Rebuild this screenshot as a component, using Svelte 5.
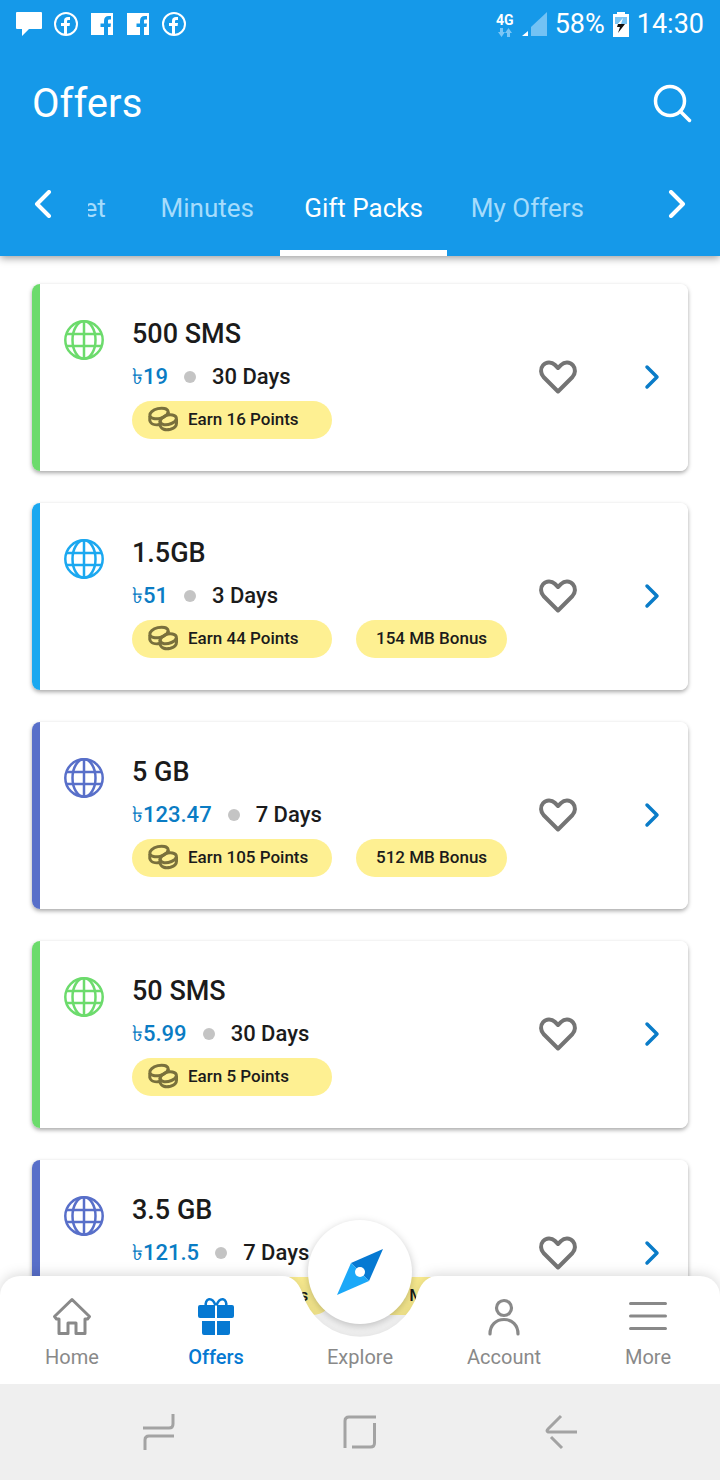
<script lang="ts">
    type Offer = {
        title: string;
        price: string;
        days: string;
        points: number;
        bonus?: string;
        color: 'green' | 'sky' | 'indigo';
    };

    const tabs = ['Internet', 'Minutes', 'Gift Packs', 'My Offers'];

    const offers: Offer[] = [
        { title: '500 SMS', price: '19', days: '30 Days', points: 16, color: 'green' },
        { title: '1.5GB', price: '51', days: '3 Days', points: 44, bonus: '154 MB Bonus', color: 'sky' },
        { title: '5 GB', price: '123.47', days: '7 Days', points: 105, bonus: '512 MB Bonus', color: 'indigo' },
        { title: '50 SMS', price: '5.99', days: '30 Days', points: 5, color: 'green' },
        { title: '3.5 GB', price: '121.5', days: '7 Days', points: 103, bonus: '358 MB Bonus', color: 'indigo' },
    ];

    let activeTab = $state('Gift Packs');
    let liked: Record<string, boolean> = $state({});
</script>

{#snippet facebookRound()}
    <svg width="24" height="24" viewBox="0 0 24 24" aria-hidden="true">
        <circle cx="12" cy="12" r="11" fill="none" stroke="#fff" stroke-width="2" />
        <path
            d="M10 22v-8H7v-3h3V9c0-3 1.600-4 4-4h2v3h-1.500c-1 0-1.500.4-1.500 1.400V11h3l-.4 3H13v8z"
            fill="#fff"
        />
    </svg>
{/snippet}

{#snippet facebookSquare()}
    <svg width="24" height="24" viewBox="0 0 24 24" aria-hidden="true">
        <path d="M1 1h22v22H1z" fill="#fff" />
        <path
            d="M14 23v-8h-3.500v-3.500H14V9c0-3.300 1.800-5 4.700-5H21v3.500h-1.500c-1.300 0-1.500.5-1.500 1.500v2.500h3l-.5 3.500H18v8z"
            fill="#1599e9"
        />
    </svg>
{/snippet}

<div class="screen">
    <header class="header">
        <div class="status-bar">
            <div class="status-group">
                <svg width="26" height="26" viewBox="1 0 26 26" aria-hidden="true">
                    <path d="M2 1h24q1 0 1 1v15q0 1-1 1H14l-7 7v-7H2q-1 0-1-1V2q0-1 1-1z" fill="#fff" />
                </svg>
                {@render facebookRound()}
                {@render facebookSquare()}
                {@render facebookSquare()}
                {@render facebookRound()}
            </div>
            <div class="status-group right">
                <div class="network">
                    <span>4G</span>
                    <svg width="14" height="9" viewBox="0 0 14 9" fill="#7cc6f5" aria-hidden="true">
                        <path d="M2 0h3v4h2L3.500 9 0 4h2z" />
                        <path d="M9 9h3V5h2l-3.500-5L7 5h2z" />
                    </svg>
                </div>
                <svg width="25" height="24" viewBox="0 0 25 24" aria-hidden="true">
                    <path d="M0 24h6v-5z" fill="#fff" />
                    <path d="M9 24V15L25 0v24z" fill="#73c2f4" />
                </svg>
                <span class="status-text">58%</span>
                <svg width="16" height="25" viewBox="0 0 16 25" aria-hidden="true">
                    <path d="M4 0h8v2h4v23H0V2h4z" fill="#fff" />
                    <path d="M2 5h12v7H2z" fill="#7cc6f5" />
                    <path d="M10 6 3 14h4l-3 7 8-9H8z" fill="#fff" />
                    <path d="M5 12h7l-7 9 2-6H4z" fill="#111" />
                </svg>
                <span class="status-text">14:30</span>
            </div>
        </div>

        <div class="title-bar">
            <h1>Offers</h1>
            <button class="icon-button" aria-label="Search">
                <svg width="40" height="40" viewBox="0 0 40 40" fill="none" stroke="#fff" stroke-width="3.500" stroke-linecap="round">
                    <circle cx="18" cy="17" r="14.500" />
                    <path d="m28.500 27.500 9 9" />
                </svg>
            </button>
        </div>

        <nav class="tab-bar" aria-label="Offer types">
            <button class="icon-button arrow" aria-label="Previous">
                <svg width="18" height="28" viewBox="0 0 18 28" fill="none" stroke="#fff" stroke-width="4" stroke-linecap="round" stroke-linejoin="round">
                    <path d="M15 2 3 14l12 12" />
                </svg>
            </button>
            <div class="tabs">
                {#each tabs as tab}
                    <button class="tab" class:active={activeTab === tab} onclick={() => (activeTab = tab)}>{tab}</button>
                {/each}
            </div>
            <button class="icon-button arrow" aria-label="Next">
                <svg width="18" height="28" viewBox="0 0 18 28" fill="none" stroke="#fff" stroke-width="4" stroke-linecap="round" stroke-linejoin="round">
                    <path d="m3 2 12 12L3 26" />
                </svg>
            </button>
        </nav>
    </header>

    <main class="list">
        {#each offers as offer}
            <article class="card {offer.color}">
                <svg class="globe" width="40" height="40" viewBox="0 0 40 40" fill="none" stroke="currentColor" stroke-width="2.500" aria-hidden="true">
                    <circle cx="20" cy="20" r="18.700" />
                    <ellipse cx="20" cy="20" rx="11.500" ry="18.700" />
                    <path d="M20 1v38M3 14h34M3 26h34" />
                </svg>
                <div class="details">
                    <h2>{offer.title}</h2>
                    <div class="terms">
                        <span class="price">৳{offer.price}</span>
                        <span class="dot"></span>
                        <span>{offer.days}</span>
                    </div>
                    <div class="badges">
                        <span class="badge points">
                            <svg width="30" height="26" viewBox="0 0 30 26" fill="none" stroke="#79703c" stroke-width="3" aria-hidden="true">
                                <ellipse cx="11" cy="7.500" rx="9.300" ry="5" transform="rotate(-14 11 7.500)" />
                                <path d="M1.800 10v4.500c.8 3.500 5 5 10 4M20.200 6v3" />
                                <path d="M12 15c2-4.500 7.500-7 12.500-6 6 1.500 4.500 6.500-1 8.500-5.500 2.300-10.500 1.800-11.500-2.500z" />
                                <path d="M12 15v4c1 4.500 5.500 5.500 10.500 4.300 4-1.200 6-3 6-6V13" />
                            </svg>
                            Earn {offer.points} Points
                        </span>
                        {#if offer.bonus}
                            <span class="badge">{offer.bonus}</span>
                        {/if}
                    </div>
                </div>
                <div class="actions">
                    <button
                        class="icon-button"
                        aria-label="Add {offer.title} to favourites"
                        aria-pressed={!!liked[offer.title]}
                        onclick={() => (liked[offer.title] = !liked[offer.title])}
                    >
                        <svg width="40" height="36" viewBox="0 0 40 36" fill={liked[offer.title] ? '#747474' : 'none'} stroke="#747474" stroke-width="4" stroke-linejoin="round">
                            <path d="M20 32.500 5.500 18C2.500 14.800 2.200 9.500 5 6.300c3.200-3.600 8.500-3.700 11.800-.5L20 9l3.200-3.200c3.300-3.200 8.600-3.100 11.800.5 2.800 3.200 2.500 8.500-.5 11.700z" />
                        </svg>
                    </button>
                    <button class="icon-button" aria-label="Open {offer.title}">
                        <svg width="16" height="26" viewBox="0 0 16 26" fill="none" stroke="#0a7cc8" stroke-width="3.500" stroke-linecap="round" stroke-linejoin="round">
                            <path d="m3 3 10 10L3 23" />
                        </svg>
                    </button>
                </div>
            </article>
        {/each}
    </main>

    <footer class="footer">
        <nav class="bottom-nav" aria-label="Main">
            <div class="nav-shape">
                <div class="side left"></div>
                <svg width="160" height="108" viewBox="0 0 160 108" aria-hidden="true">
                    <path d="M0 0h2c10 0 16 6 20 16A60 60 0 0 0 138 16c4-10 10-16 20-16h2v108H0z" fill="#fff" />
                </svg>
                <div class="side right"></div>
            </div>
            <a class="nav-item" href="#home">
                <svg width="40" height="40" viewBox="0 0 40 40" fill="none" stroke="#898989" stroke-width="3" stroke-linejoin="round" aria-hidden="true">
                    <path d="M20 2.500 2.500 19.500l2 2.500H7v14.500h9V26h8v10.500h9V22h2.500l2-2.500z" />
                </svg>
                Home
            </a>
            <a class="nav-item active" href="#offers" aria-current="page">
                <svg width="40" height="40" viewBox="0 0 40 40" fill="#0679d2" aria-hidden="true">
                    <path d="M4 8h15v13H4q-2 0-2-2v-9q0-2 2-2zM21 8h15q2 0 2 2v9q0 2-2 2H21zM6 24h13v14H8q-2 0-2-2zM21 24h13v12q0 2-2 2H21z" />
                    <path d="M19.500 8.500C18 4 15.500 2 13 2.300S9 6 10 9M20.500 8.500C22 4 24.500 2 27 2.300S31 6 30 9" fill="none" stroke="#0679d2" stroke-width="2.500" />
                </svg>
                Offers
            </a>
            <a class="nav-item" href="#explore">
                <span class="compass">
                    <svg width="48" height="48" viewBox="0 0 48 48" aria-hidden="true">
                        <path d="M47 1 15 15l18 18z" fill="#0679d2" />
                        <path d="M1 47 15 15l18 18z" fill="#1ba8f8" />
                        <circle cx="24" cy="24" r="5" fill="#fff" />
                    </svg>
                </span>
                Explore
            </a>
            <a class="nav-item" href="#account">
                <svg width="40" height="40" viewBox="0 0 40 40" fill="none" stroke="#898989" stroke-width="3.200" stroke-linecap="round" aria-hidden="true">
                    <circle cx="20" cy="11" r="7.500" />
                    <path d="M6 37c0-9 6-14.500 14-14.500S34 28 34 37" />
                </svg>
                Account
            </a>
            <a class="nav-item" href="#more">
                <svg width="40" height="40" viewBox="0 0 40 40" stroke="#898989" stroke-width="3" stroke-linecap="round" aria-hidden="true">
                    <path d="M2.500 6.500h35M2.500 19h35M2.500 31.500h35" />
                </svg>
                More
            </a>
        </nav>

        <div class="system-bar">
            <button class="icon-button" aria-label="Recent apps">
                <svg width="36" height="36" viewBox="0 0 36 36" fill="none" stroke="#a3a3a3" stroke-width="3">
                    <path d="M2 14h26q4 0 4-4V0M33 22H8q-4 0-4 4v10" />
                </svg>
            </button>
            <button class="icon-button" aria-label="Home screen">
                <svg width="36" height="36" viewBox="0 0 36 36" fill="none" stroke="#a3a3a3" stroke-width="3">
                    <path d="M34 3H7q-4 0-4 4v27M32.500 9v20q0 4-4 4H10" />
                </svg>
            </button>
            <button class="icon-button" aria-label="Back">
                <svg width="36" height="36" viewBox="0 0 36 36" fill="none" stroke="#a3a3a3" stroke-width="3">
                    <path d="M34 18H5q-2-1 0-3L18 2M8 23l11 11" />
                </svg>
            </button>
        </div>
    </footer>
</div>

<style>
    :global(body) {
        margin: 0;
        background-color: #fff;
    }

    .screen {
        position: relative;
        display: flex;
        flex-direction: column;
        height: 100vh;
        overflow: hidden;
        font-family: Roboto, 'Noto Sans', sans-serif;
        color: #1b1b1b;
    }

    .icon-button {
        display: flex;
        padding: 0;
        border: none;
        background: none;
        cursor: pointer;
    }

    .header {
        z-index: 1;
        background-color: #1599e9;
        color: #fff;
        box-shadow: 0 2px 8px rgba(0, 0, 0, 0.4);
    }

    .status-bar {
        display: flex;
        align-items: center;
        justify-content: space-between;
        height: 48px;
        padding: 0 16px;
    }

    .status-group {
        display: flex;
        align-items: center;
        gap: 12px;
    }

    .status-group.right {
        gap: 8px;
    }

    .status-text {
        font-size: 27px;
        line-height: 32px;
    }

    .network {
        display: flex;
        flex-direction: column;
        align-items: center;
        font-size: 14px;
        font-weight: 700;
        line-height: 16px;
    }

    .title-bar {
        display: flex;
        align-items: center;
        justify-content: space-between;
        height: 112px;
        padding: 0 28px 0 32px;
    }

    h1 {
        margin: 0;
        font-size: 40px;
        font-weight: 400;
        line-height: 52px;
    }

    .tab-bar {
        display: flex;
        align-items: center;
        height: 96px;
        padding: 0 34px;
    }

    .arrow {
        padding-bottom: 8px;
    }

    .tabs {
        display: flex;
        flex: 1;
        align-self: stretch;
        justify-content: flex-end;
        margin: 0 36px;
        padding-right: 24px;
        overflow: hidden;
    }

    .tab {
        flex: none;
        min-width: 146px;
        padding: 6px 24px 0;
        border: none;
        border-bottom: 6px solid transparent;
        background: none;
        color: #a5dcfc;
        font-family: inherit;
        font-size: 26px;
        cursor: pointer;
    }

    .tab.active {
        border-bottom-color: #fff;
        color: #fff;
    }

    .list {
        display: flex;
        flex: 1;
        flex-direction: column;
        gap: 32px;
        min-height: 0;
        padding: 28px 32px 0;
        overflow: hidden auto;
        scrollbar-width: none;
    }

    .card {
        display: flex;
        flex: none;
        align-items: flex-start;
        padding: 32px 28px 32px 32px;
        border-radius: 8px;
        background: linear-gradient(to right, currentColor 8px, #fff 8px);
        box-shadow: 0 2px 4px rgba(0, 0, 0, 0.35);
    }

    .card.green {
        color: #6cdb6c;
    }

    .card.sky {
        color: #1ba8f0;
    }

    .card.indigo {
        color: #586fc9;
    }

    .globe {
        flex: none;
        margin: 4px 28px 0 0;
    }

    .details {
        flex: 1;
        color: #1b1b1b;
    }

    h2 {
        margin: 0;
        font-size: 27px;
        font-weight: 500;
        line-height: 36px;
    }

    .terms {
        display: flex;
        align-items: center;
        gap: 16px;
        margin: 7px 0 6px;
        font-size: 22px;
        font-weight: 500;
        line-height: 36px;
    }

    .price {
        color: #0a7cc4;
    }

    .dot {
        width: 12px;
        height: 12px;
        border-radius: 50%;
        background-color: #c4c4c4;
    }

    .badges {
        display: flex;
        gap: 24px;
    }

    .badge {
        display: flex;
        align-items: center;
        box-sizing: border-box;
        height: 38px;
        padding: 0 20px 2px;
        border-radius: 19px;
        background-color: #fef092;
        font-size: 17px;
        font-weight: 500;
        white-space: nowrap;
    }

    .badge.points {
        gap: 10px;
        width: 200px;
        padding: 0 16px 2px;
    }

    .actions {
        display: flex;
        align-items: center;
        align-self: center;
        gap: 66px;
        padding-bottom: 2px;
    }

    .footer {
        position: absolute;
        right: 0;
        bottom: 0;
        left: 0;
        z-index: 2;
    }

    .bottom-nav {
        position: relative;
        display: grid;
        grid-template-columns: repeat(5, 1fr);
        height: 108px;
    }

    /* White bar with a notch in the middle for the compass button */
    .nav-shape {
        position: absolute;
        inset: 0;
        display: flex;
        filter: drop-shadow(0 -2px 6px rgba(0, 0, 0, 0.14));
    }

    .side {
        flex: 1;
        background-color: #fff;
    }

    .side.left {
        border-top-left-radius: 20px;
    }

    .side.right {
        border-top-right-radius: 20px;
    }

    .nav-item {
        position: relative;
        display: flex;
        flex-direction: column;
        align-items: center;
        justify-content: flex-end;
        gap: 8px;
        padding-bottom: 15px;
        color: #898989;
        font-size: 20px;
        line-height: 24px;
        text-decoration: none;
    }

    .nav-item.active {
        color: #0679d2;
        font-weight: 500;
    }

    .compass {
        position: absolute;
        bottom: 60px;
        display: flex;
        align-items: center;
        justify-content: center;
        width: 104px;
        height: 104px;
        border-radius: 50%;
        background-color: #fff;
        box-shadow: 0 3px 8px rgba(0, 0, 0, 0.25);
    }

    .system-bar {
        position: relative;
        display: grid;
        grid-template-columns: repeat(3, 1fr);
        align-items: center;
        justify-items: center;
        height: 96px;
        padding: 0 58px;
        background-color: #efefef;
    }
</style>
